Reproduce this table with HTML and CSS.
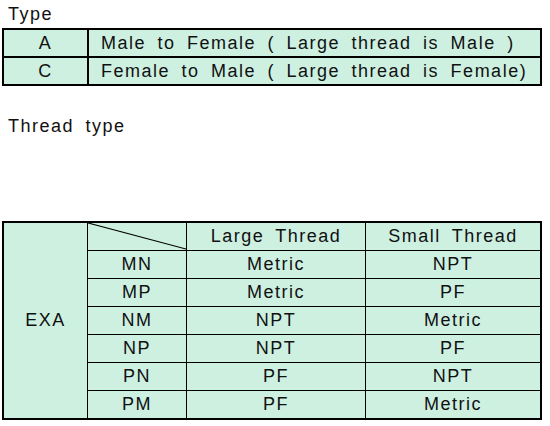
FILE: index.html
```html
<!DOCTYPE html>
<html>
<head>
<meta charset="utf-8">
<link rel="stylesheet" href="styles.css">
</head>
<body>
<div class="page">
  <div class="title title-type">Type</div>
  <table class="type-table">
    <tr><td class="code">A</td><td class="desc">Male to Female ( Large thread is Male )</td></tr>
    <tr><td class="code">C</td><td class="desc">Female to Male ( Large thread is Female)</td></tr>
  </table>
  <div class="title title-thread">Thread type</div>
  <table class="thread-table">
    <tr class="head">
      <td class="series" rowspan="7">EXA</td>
      <td class="diag"><svg class="diag-line" width="99" height="27" viewBox="0 0 99 27" preserveAspectRatio="none"><line x1="0" y1="0" x2="99" y2="26" stroke="#000" stroke-width="1.2"/></svg></td>
      <td>Large Thread</td>
      <td>Small Thread</td>
    </tr>
    <tr><td>MN</td><td>Metric</td><td>NPT</td></tr>
    <tr><td>MP</td><td>Metric</td><td>PF</td></tr>
    <tr><td>NM</td><td>NPT</td><td>Metric</td></tr>
    <tr><td>NP</td><td>NPT</td><td>PF</td></tr>
    <tr><td>PN</td><td>PF</td><td>NPT</td></tr>
    <tr><td>PM</td><td>PF</td><td>Metric</td></tr>
  </table>
</div>
</body>
</html>
```

FILE: styles.css
```css
html, body {
  margin: 0;
  padding: 0;
  background: #ffffff;
}
.page {
  font-family: "Liberation Sans", Arial, sans-serif;
  font-size: 18px;
  color: #111111;
  word-spacing: 5px;
  letter-spacing: 1.5px;
}
.title {
  padding-left: 8px;
  line-height: 20px;
}
.title-type {
  padding-top: 4px;
  height: 24px;
}
.title-thread {
  margin-top: 30px;
  height: 105px;
}
table {
  border-collapse: collapse;
  background: #cdf0e1;
  margin-left: 2px;
}
.type-table {
  width: 540px;
  border: 2px solid #000;
}
.type-table td {
  border: 2px solid #000;
  height: 26px;
  padding: 0;
}
.type-table .code {
  width: 83px;
  text-align: center;
}
.type-table .desc {
  padding-left: 12px;
}
.thread-table {
  width: 540px;
  border: 2px solid #000;
  table-layout: fixed;
}
.thread-table td {
  border: 1px solid #000;
  height: 27px;
  padding: 0;
  text-align: center;
}
.thread-table .series {
  width: 83px;
  border-right: 1px solid #000;
}
.thread-table .diag {
  width: 98px;
  position: relative;
}
.diag-line {
  position: absolute;
  left: 0;
  top: 0;
  width: 100%;
  height: 100%;
}
.thread-table td:nth-child(3) {
  width: 178px;
}
```
